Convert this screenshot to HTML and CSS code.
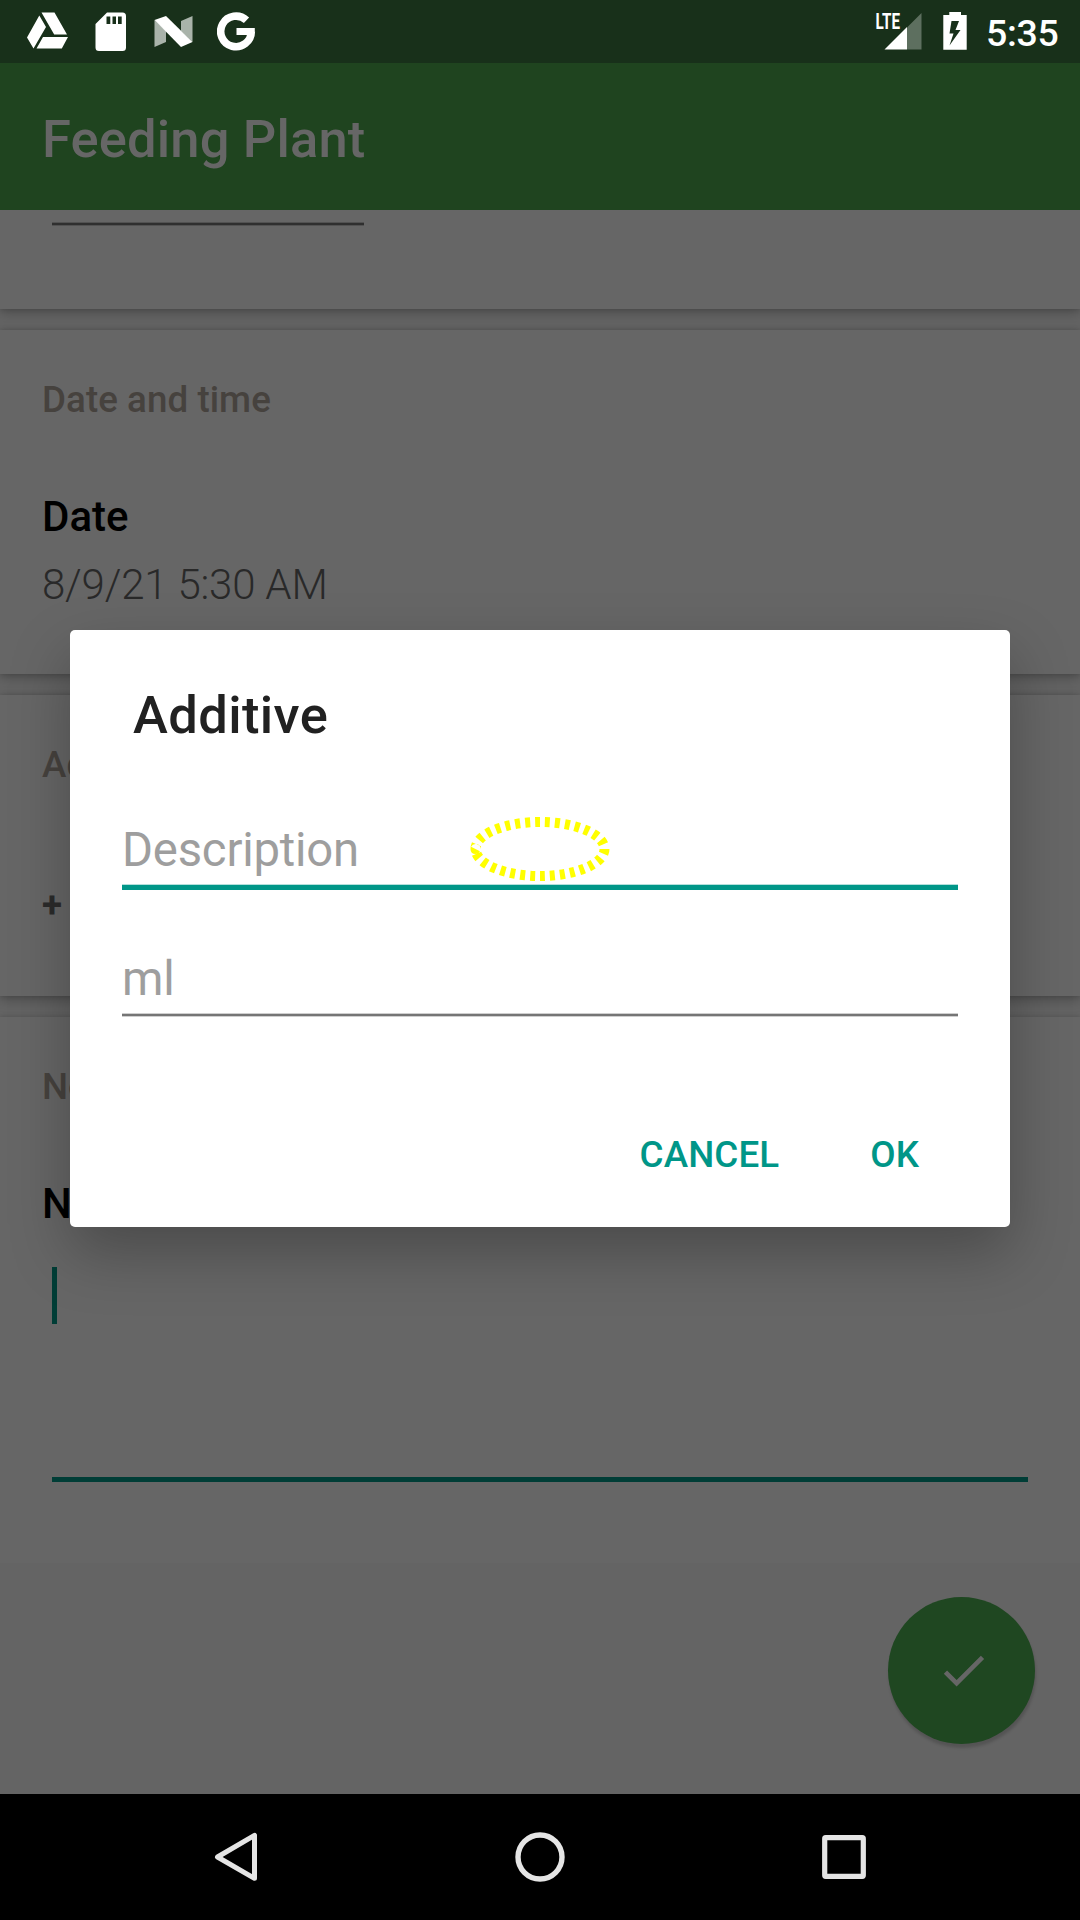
FILE: index.html
```html
<!DOCTYPE html>
<html lang="en">
<head>
<meta charset="utf-8">
<title>Feeding Plant</title>
<link rel="stylesheet" href="styles.css">
</head>
<body>
<div class="screen">
  <header class="status-bar">
    <div class="status-left">
      <svg class="icon-drive" viewBox="27 12 42 38" width="42" height="38"><path fill="#fff" d="M41.5 12.5H54.5L67 34.5H54.2ZM39.3 15.5L46 27L33.500 48.500L27 37.500ZM43 37H68L61.800 48.500H36.500Z"/></svg>
      <svg class="icon-sd" viewBox="95 12 32 39" width="32" height="39"><path fill="#fff" fill-rule="evenodd" d="M107 12.500H122.500Q126 12.500 126 16V47.500Q126 51 122.500 51H99Q95.500 51 95.500 47.500V24ZM106.500 16.500V24H110.300V16.500ZM112.500 16.500V24H116V16.500ZM118 16.500V24H121.700V16.500Z"/></svg>
      <svg class="icon-n" viewBox="154 15 39 33" width="39" height="33"><path fill="#a9b3aa" d="M154.500 20L166 31V42L154.500 47ZM181 21L192.500 16V42L181 31Z"/><path fill="#fff" d="M154.500 20L166 16L192.500 42L181 47Z"/></svg>
      <svg class="icon-g" viewBox="217 12 39 39" width="39" height="39"><path fill="none" stroke="#fff" stroke-width="7.600" d="M246.500 20.300A15.300 15.300 0 1 0 251.300 31.500"/><path fill="#fff" d="M236.500 28H254.800V31.500L251 35H236.500Z"/></svg>
    </div>
    <div class="status-right">
      <svg class="icon-signal" viewBox="873 8 50 43" width="50" height="43"><path fill="#5d6f5f" d="M907 27.500L921.500 13V49.500H907Z"/><path fill="#fff" d="M884.500 49.500L907 27V49.500Z"/><text class="lte" x="875.500" y="29" textLength="24.500" lengthAdjust="spacingAndGlyphs">LTE</text></svg>
      <svg class="icon-battery" viewBox="943 12 25 38" width="25" height="38"><path fill="#fff" fill-rule="evenodd" d="M949.300 12H961V15H966.700V49.700H943.300V15H949.300ZM951.500 21L949.500 33.500H953.500L949.500 45.500L960.500 30H955.500L959 21Z"/></svg>
      <span class="clock">5:35</span>
    </div>
  </header>

  <div class="app-bar"><h1 class="app-title">Feeding Plant</h1></div>

  <main class="content">
    <section class="card card-first"><div class="field-line"></div></section>
    <section class="card card-date">
      <h2 class="card-heading">Date and time</h2>
      <div class="label">Date</div>
      <div class="value">8/9/21 5:30 AM</div>
    </section>
    <section class="card card-additives">
      <h2 class="card-heading">Additives</h2>
      <div class="add">+</div>
    </section>
    <section class="card card-notes">
      <h2 class="card-heading">Notes</h2>
      <div class="label">Notes</div>
      <div class="note-input"><div class="caret"></div></div>
    </section>
    <div class="content-end"></div>
  </main>

  <div class="fab"><svg viewBox="0 0 24 24" width="55" height="55"><path fill="#666" d="M9 16.170L4.830 12l-1.420 1.410L9 19 21 7l-1.410-1.410z"/></svg></div>

  <div class="dialog">
    <h2 class="dialog-title">Additive</h2>
    <div class="input input-focused">Description</div>
    <div class="input">ml</div>
    <div class="actions"><span>CANCEL</span><span>OK</span></div>
    <svg class="marker" viewBox="465 812 150 74" width="150" height="74"><path fill="none" stroke="#ff0" stroke-width="10" pathLength="300" stroke-dasharray="5 5" stroke-dashoffset="5" d="M540 822A64.500 27 0 0 1 540 876A64.500 27 0 0 1 540 822"/></svg>
  </div>

  <nav class="nav-bar">
    <svg viewBox="0 0 60 60" width="60" height="60"><path d="M48.500 8.300V51.300L11.500 30Z" fill="none" stroke="#e5e5e5" stroke-width="5" stroke-linejoin="round"/></svg>
    <svg viewBox="0 0 60 60" width="60" height="60"><circle cx="30" cy="30" r="22" fill="none" stroke="#e5e5e5" stroke-width="5.400"/></svg>
    <svg viewBox="0 0 60 60" width="60" height="60"><rect x="10.700" y="10.700" width="38.600" height="38.600" rx="1" fill="none" stroke="#e5e5e5" stroke-width="5.200"/></svg>
  </nav>
</div>
</body>
</html>
```
FILE: styles.css
```css
* { box-sizing: border-box; }
body { margin: 0; font-family: Roboto, sans-serif; }
h1, h2 { margin: 0; font-weight: 500; }
svg { display: block; flex: none; }

.screen {
  position: relative;
  width: 1080px;
  height: 1920px;
  overflow: hidden;
  display: flex;
  flex-direction: column;
  background: #646464;
}

.status-bar {
  height: 63px;
  flex: none;
  display: flex;
  justify-content: space-between;
  background: #18301a;
}
.status-left, .status-right { display: flex; align-items: flex-start; }
.status-left { padding: 12px 0 0 27px; }
.icon-sd { margin-left: 26px; }
.icon-n { margin: 3px 0 0 27px; }
.icon-g { margin-left: 24px; }
.status-right { padding: 8px 21px 0 0; }
.icon-battery { margin: 4px 0 0 20px; }
.lte { font-size: 22px; font-weight: 700; fill: #fff; }
.clock {
  margin: 4px 0 0 18px;
  width: 73px;
  font-size: 37.500px;
  font-weight: 500;
  line-height: 42px;
  letter-spacing: -0.3px;
  color: #fff;
}

.app-bar {
  height: 147px;
  flex: none;
  padding: 45px 42px;
  background: #1f441f;
}
.app-title { font-size: 52.500px; line-height: 62px; letter-spacing: 0.15px; color: #666; }

.content {
  height: 1584px;
  flex: none;
  overflow: hidden;
  display: flex;
  flex-direction: column;
  gap: 21px;
}
.card {
  flex: none;
  padding: 48px 42px 0;
  background: #666;
  box-shadow: 0 4px 12px rgba(0, 0, 0, .24), 0 0 5px rgba(0, 0, 0, .16);
}
.card-first { height: 99px; padding: 13px 52px 0; }
.field-line { width: 312px; height: 2px; background: #2f2f2f; box-shadow: 0 0 0 1px rgba(47, 47, 47, .35); clip-path: inset(-1px 0); }
.card-date { height: 344px; }
.card-additives { height: 301px; }
.card-notes { height: 546px; box-shadow: 0 -1px 5px rgba(0, 0, 0, .16); }
.content-end { flex: 1; margin-top: -21px; background: #646464; }
.card-heading { font-size: 36.750px; line-height: 44px; letter-spacing: 0.05px; color: #46423e; }
.label { margin-top: 70px; font-size: 42px; font-weight: 500; line-height: 50px; color: #000; }
.value { margin-top: 18px; font-size: 42px; font-weight: 300; line-height: 50px; letter-spacing: -0.2px; color: #292929; }
.add { margin-top: 96px; font-size: 36.750px; font-weight: 700; line-height: 44px; color: #2b2b2b; }
.note-input {
  margin: 38px 10px 0;
  height: 215px;
  border-bottom: 5px solid #003d36;
}
.caret { width: 5px; height: 57px; background: #003d36; }

.fab {
  position: absolute;
  left: 888px;
  top: 1597px;
  width: 147px;
  height: 147px;
  padding-left: 3px;
  border-radius: 50%;
  display: flex;
  align-items: center;
  justify-content: center;
  background: #1f4721;
  box-shadow: 1px 4px 3px rgba(0, 0, 0, .16);
}

.dialog {
  position: absolute;
  left: 70px;
  top: 630px;
  width: 940px;
  height: 597px;
  padding: 54px 52px 0;
  border-radius: 5px;
  background: #fff;
  box-shadow: 0 26px 60px rgba(0, 0, 0, .27);
}
.dialog-title { padding-left: 11px; font-size: 52.500px; line-height: 62px; letter-spacing: 0.4px; color: #212121; }
.input {
  display: flex;
  flex-direction: column;
  height: 128px;
  padding-top: 76px;
  font-size: 47.250px;
  line-height: 56px;
  letter-spacing: -0.2px;
  color: #9e9e9e;
}
.input::after {
  content: "";
  flex: none;
  height: 2px;
  margin-top: 7px;
  background: #757575;
  box-shadow: 0 0 0 1px rgba(117, 117, 117, .35);
  clip-path: inset(-1px 0);
}
.input-focused { height: 129px; }
.input-focused::after { height: 5px; background: #009688; box-shadow: 0 -1px 0 #b3dfdb; }
.actions {
  display: flex;
  justify-content: flex-end;
  gap: 91px;
  padding-right: 39px;
  margin-top: 130px;
  font-size: 36.750px;
  font-weight: 500;
  line-height: 44px;
  letter-spacing: 0.1px;
  color: #009688;
}
.marker { position: absolute; left: 395px; top: 182px; }

.nav-bar {
  height: 126px;
  flex: none;
  display: flex;
  justify-content: center;
  align-items: center;
  gap: 244px;
  background: #000;
}
```
